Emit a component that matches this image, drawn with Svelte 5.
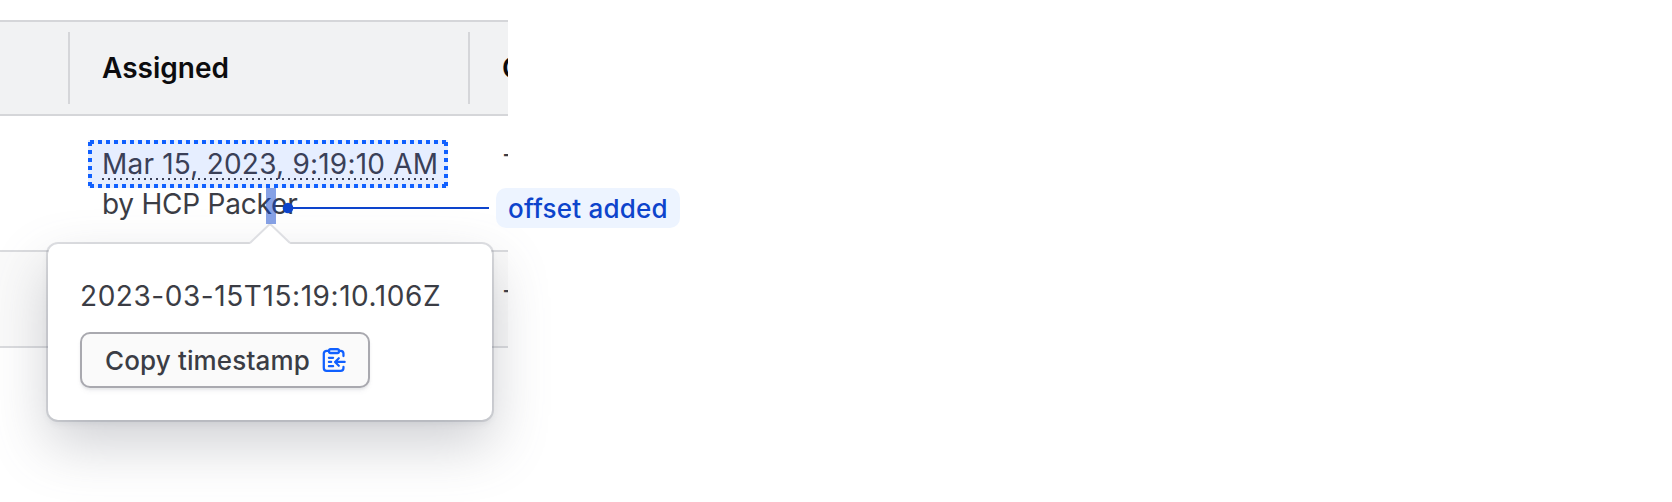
<script>
  const rows = [
    { date: 'Mar 15, 2023, 9:19:10 AM', by: 'by HCP Packer', next: '-' },
    { date: '', by: '', next: '-' }
  ];
</script>

<main>
  <div class="table">
    <div class="tr head">
      <div class="th first"></div>
      <div class="th mid"><span class="title">Assigned</span></div>
      <div class="th"><span class="title">C</span></div>
    </div>
    {#each rows as row, i}
      <div class="tr row{i + 1}">
        <div class="td first"></div>
        <div class="td mid">
          {#if row.date}
            <span class="focus"><span class="date">{row.date}</span></span>
            <span class="by">{row.by}</span>
          {/if}
        </div>
        <div class="td"><span class="dash">{row.next}</span></div>
      </div>
    {/each}
  </div>

  <div class="popover">
    <svg class="arrow" width="44" height="22" viewBox="0 0 44 22">
      <path d="M1 22 L2 20.5 L20.5 2.2 Q22 .8 23.5 2.2 L42 20.5 L43 22Z" fill="#fff" />
      <path d="M2 20 L20.5 2.2 Q22 .8 23.5 2.2 L42 20" fill="none" stroke="#dedfe3" stroke-width="2" />
    </svg>
    <div class="stamp"><span>2023-03-15T15:19:10.106Z</span></div>
    <button>
      <span>Copy timestamp</span>
      <svg width="24" height="24" viewBox="0 0 16 16" fill="none" stroke="#1060ff" stroke-width="1.5" stroke-linecap="round" stroke-linejoin="round">
        <path d="M4.7 1.9H3.1C2 1.9 1.2 2.5 1.2 3.7v9.6c0 1.100.8 1.900 1.900 1.900h9.300c1.100 0 1.900-.6 1.900-1.700v-.9M14.300 5.400V3.700c0-1.200-.8-1.800-1.900-1.800h-1.100" />
        <rect x="4.700" y=".8" width="6.600" height="2.600" rx="1" fill="#c5d9ff" />
        <path d="M4.600 6.500h2.800M4.600 9.300h1.500M4.600 12.100h2.800M15.100 9.300H9M11.200 6.800 8.700 9.300l2.500 2.500" />
      </svg>
    </button>
  </div>

  <div class="offset"></div>
  <svg class="leader" width="208" height="12" viewBox="0 0 208 12">
    <circle cx="6" cy="6" r="5.300" fill="#0d44cc" />
    <path d="M6 6H207" stroke="#0d44cc" stroke-width="2" />
  </svg>
  <div class="note"><span>offset added</span></div>
</main>

<style>
  :global(body) { background: #fff; }
  main {
    position: relative;
    width: 1672px;
    height: 502px;
    overflow: hidden;
    box-sizing: border-box;
    padding-top: 20px;
    font-family: Inter, "Liberation Sans", sans-serif;
    font-size: 28px;
    line-height: 40px;
    color: #3b3d45;
    white-space: nowrap;
  }
  main * { box-sizing: border-box; }
  .table { width: 508px; overflow: hidden; }
  .tr { display: flex; border-bottom: 2px solid #dadbde; }
  .head { height: 96px; border-top: 2px solid #d5d6d9; border-bottom-color: #d5d6d9; background: #f1f2f3; color: #0c0c0e; font-weight: 560; padding: 10px 0; }
  .first { flex: 0 0 68px; }
  .mid { flex: 0 0 400px; }
  .th + .th { border-left: 2px solid #d5d6d9; }
  .th { padding: 16px 0 0 32px; }
  .td { padding-left: 34px; }
  .row1 { height: 136px; padding-top: 24px; }
  .row2 { height: 96px; background: #fafafa; padding-top: 24px; }
  .row1 .mid, .row2 .mid { display: flex; flex-direction: column; align-items: flex-start; }
  .focus {
    display: block;
    width: 360px;
    height: 48px;
    margin-left: -14px;
    padding: 4px 0 0 14px;
    background:
      repeating-linear-gradient(90deg, #1060ff 0 4px, transparent 4px 8px) 2px 0 / 356px 4px no-repeat,
      repeating-linear-gradient(90deg, #1060ff 0 4px, transparent 4px 8px) 2px 100% / 356px 4px no-repeat,
      repeating-linear-gradient(180deg, #1060ff 0 4px, transparent 4px 8px) 0 2px / 4px 44px no-repeat,
      repeating-linear-gradient(180deg, #1060ff 0 4px, transparent 4px 8px) 100% 2px / 4px 44px no-repeat,
      #e6eeff;
  }
  .date {
    display: block;
    width: 336px;
    height: 36px;
    color: #3a4058;
    letter-spacing: .21px;
    background: repeating-linear-gradient(90deg, #3a4058 0 2px, transparent 2px 6px) 0 100% / 100% 2px no-repeat;
  }
  .by { margin-top: -4px; letter-spacing: -.23px; }
  .dash { display: block; margin-top: -6px; }
  .popover {
    position: absolute;
    left: 48px;
    top: 244px;
    width: 444px;
    height: 176px;
    padding: 32px;
    border-radius: 10px;
    background: #fff;
    box-shadow: 0 0 0 2px #656a7633, 0 4px 6px #656a761a, 0 24px 56px #656a7650;
  }
  .arrow { position: absolute; left: 200px; top: -21px; }
  .stamp { height: 40px; letter-spacing: .56px; }
  button {
    display: flex;
    align-items: center;
    justify-content: space-between;
    width: 290px;
    height: 56px;
    margin-top: 16px;
    padding: 0 22px 0 23px;
    border: 2px solid #a9a9af;
    border-radius: 10px;
    background: #fafafa;
    box-shadow: 0 2px 2px #656a761a, 0 4px 4px #656a760d;
    font: 480 26px/32px Inter, sans-serif;
    letter-spacing: .14px;
    color: #3b3d45;
  }
  button span { padding-top: 2px; }
  .offset { position: absolute; left: 266px; top: 188px; width: 10px; height: 36px; background: #0d44cc80; }
  .leader { position: absolute; left: 282px; top: 202px; }
  .note {
    position: absolute;
    left: 496px;
    top: 188px;
    width: 184px;
    height: 40px;
    padding: 1px 0 0 12px;
    border-radius: 10px;
    background: #edf4ff;
    color: #0d44cc;
    font-size: 26px;
    font-weight: 480;
    letter-spacing: .22px;
  }
</style>
